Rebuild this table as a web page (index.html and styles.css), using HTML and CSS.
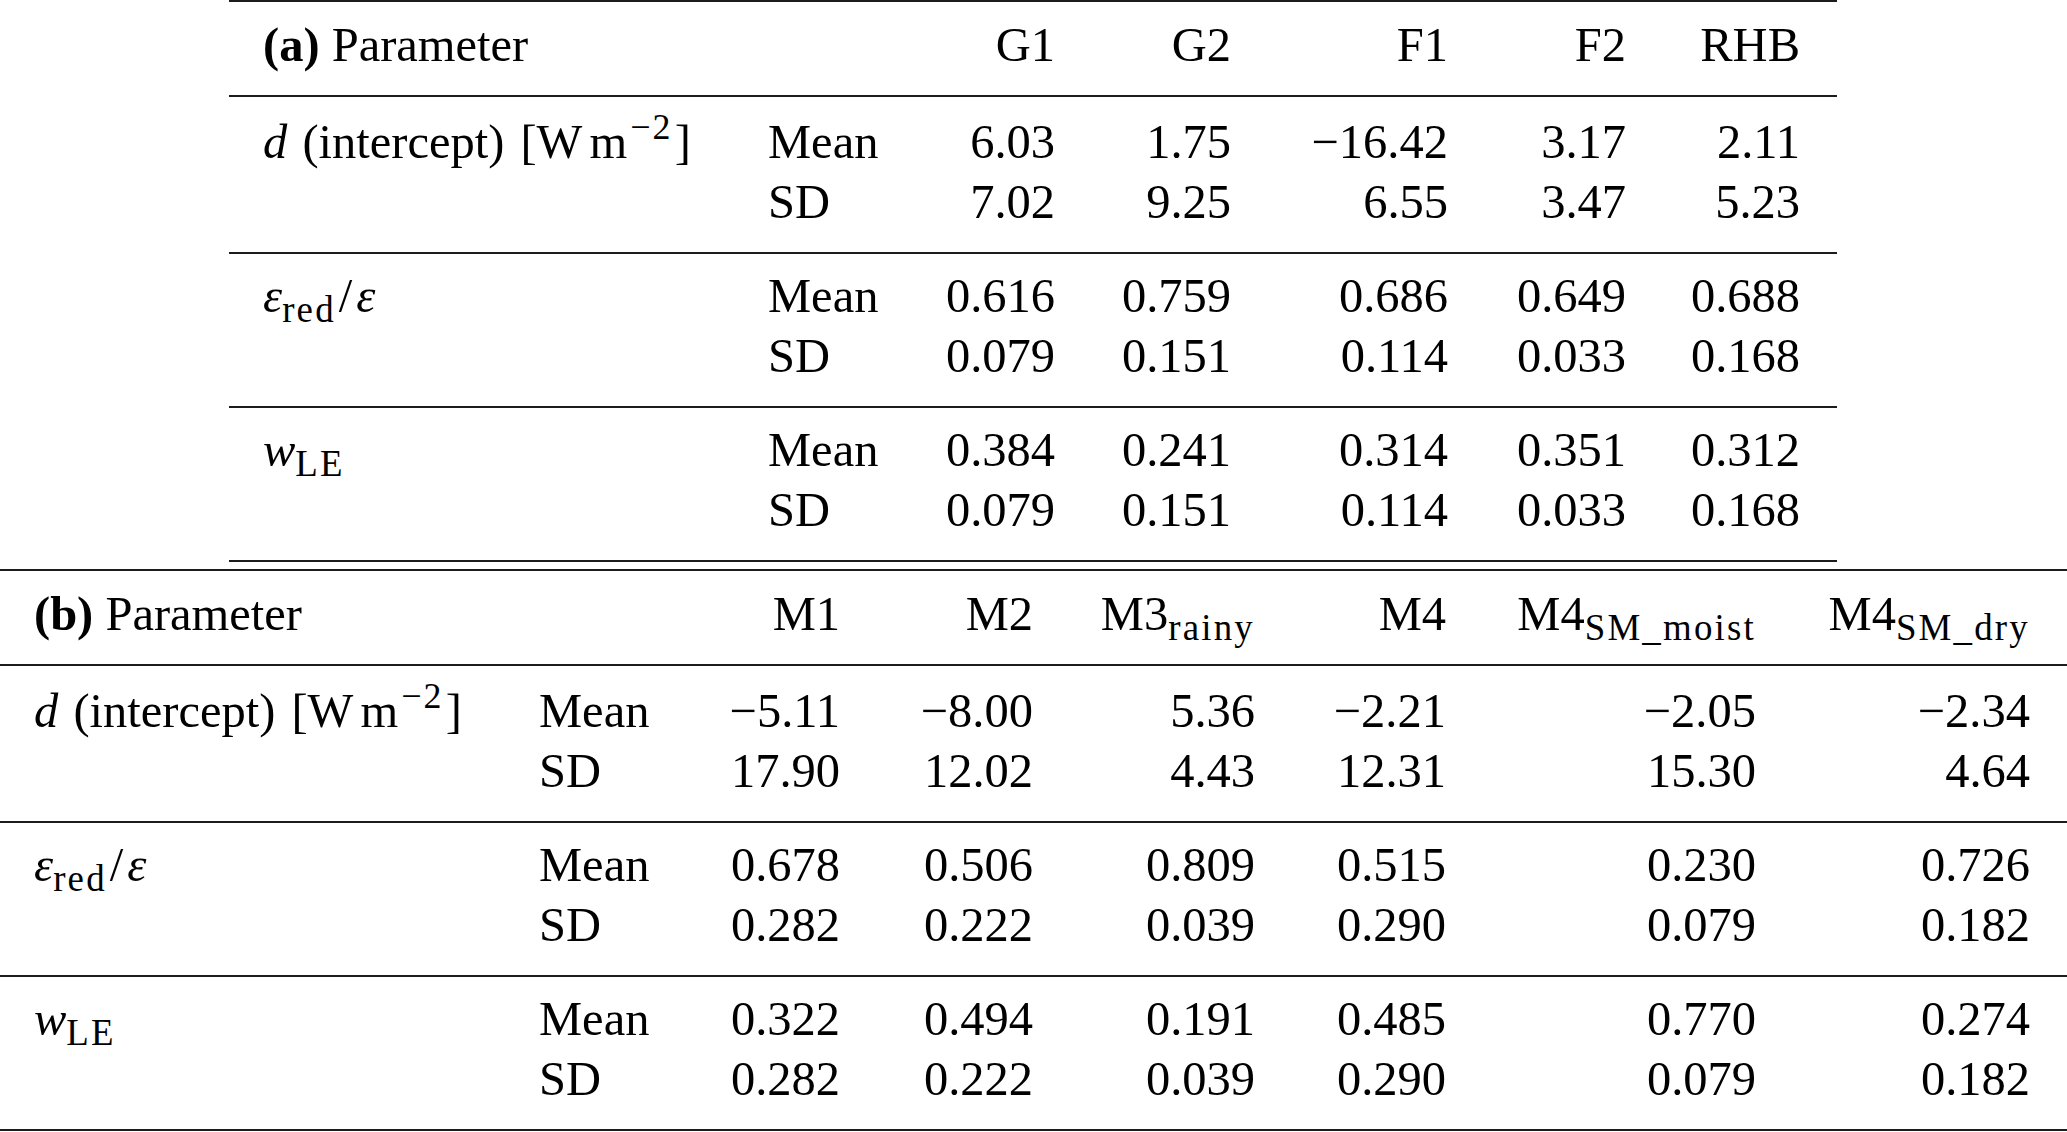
FILE: index.html
```html
<!DOCTYPE html>
<html lang="en">
<head>
<meta charset="utf-8">
<title>Parameter table</title>
<link rel="stylesheet" href="styles.css">
</head>
<body>
<section class="tbl tbl-a">
  <div class="row head">
    <div class="label"><b>(a)</b> Parameter</div>
    <div></div>
    <div class="num">G1</div>
    <div class="num">G2</div>
    <div class="num">F1</div>
    <div class="num">F2</div>
    <div class="num">RHB</div>
  </div>
  <div class="row group first">
    <div class="label"><i>d</i> <span class="wide">(intercept)</span> [W<span class="thin"></span>m<span class="sup">−2</span>]</div>
    <div>Mean</div>
    <div class="num">6.03</div><div class="num">1.75</div><div class="num">−16.42</div><div class="num">3.17</div><div class="num">2.11</div>
    <div>SD</div>
    <div class="num">7.02</div><div class="num">9.25</div><div class="num">6.55</div><div class="num">3.47</div><div class="num">5.23</div>
  </div>
  <div class="row group">
    <div class="label"><i>ε</i><span class="sub">red</span><span class="slash">/</span><i>ε</i></div>
    <div>Mean</div>
    <div class="num">0.616</div><div class="num">0.759</div><div class="num">0.686</div><div class="num">0.649</div><div class="num">0.688</div>
    <div>SD</div>
    <div class="num">0.079</div><div class="num">0.151</div><div class="num">0.114</div><div class="num">0.033</div><div class="num">0.168</div>
  </div>
  <div class="row group">
    <div class="label"><i>w</i><span class="sub">LE</span></div>
    <div>Mean</div>
    <div class="num">0.384</div><div class="num">0.241</div><div class="num">0.314</div><div class="num">0.351</div><div class="num">0.312</div>
    <div>SD</div>
    <div class="num">0.079</div><div class="num">0.151</div><div class="num">0.114</div><div class="num">0.033</div><div class="num">0.168</div>
  </div>
</section>
<section class="tbl tbl-b">
  <div class="row head">
    <div class="label"><b>(b)</b> Parameter</div>
    <div></div>
    <div class="num">M1</div>
    <div class="num">M2</div>
    <div class="num">M3<span class="sub">rainy</span></div>
    <div class="num">M4</div>
    <div class="num">M4<span class="sub">SM_moist</span></div>
    <div class="num">M4<span class="sub">SM_dry</span></div>
  </div>
  <div class="row group first">
    <div class="label"><i>d</i> <span class="wide">(intercept)</span> [W<span class="thin"></span>m<span class="sup">−2</span>]</div>
    <div>Mean</div>
    <div class="num">−5.11</div><div class="num">−8.00</div><div class="num">5.36</div><div class="num">−2.21</div><div class="num">−2.05</div><div class="num">−2.34</div>
    <div>SD</div>
    <div class="num">17.90</div><div class="num">12.02</div><div class="num">4.43</div><div class="num">12.31</div><div class="num">15.30</div><div class="num">4.64</div>
  </div>
  <div class="row group">
    <div class="label"><i>ε</i><span class="sub">red</span><span class="slash">/</span><i>ε</i></div>
    <div>Mean</div>
    <div class="num">0.678</div><div class="num">0.506</div><div class="num">0.809</div><div class="num">0.515</div><div class="num">0.230</div><div class="num">0.726</div>
    <div>SD</div>
    <div class="num">0.282</div><div class="num">0.222</div><div class="num">0.039</div><div class="num">0.290</div><div class="num">0.079</div><div class="num">0.182</div>
  </div>
  <div class="row group">
    <div class="label"><i>w</i><span class="sub">LE</span></div>
    <div>Mean</div>
    <div class="num">0.322</div><div class="num">0.494</div><div class="num">0.191</div><div class="num">0.485</div><div class="num">0.770</div><div class="num">0.274</div>
    <div>SD</div>
    <div class="num">0.282</div><div class="num">0.222</div><div class="num">0.039</div><div class="num">0.290</div><div class="num">0.079</div><div class="num">0.182</div>
  </div>
</section>
</body>
</html>
```
FILE: styles.css
```css
html, body {
  margin: 0;
  padding: 0;
  background: #ffffff;
  overflow: hidden;
}

body {
  color: #000000;
  font-family: "Liberation Serif", "Times New Roman", serif;
  font-size: 48.5px;
  line-height: 60px;
}

.tbl {
  border-top: 2px solid #1c1c1c;
}

.tbl-a {
  margin-left: 229px;
  width: 1608px;
}

.tbl-b {
  margin-top: 7px;
  width: 2067px;
}

.row {
  display: grid;
  padding: 12px 37px 20px 0;
  border-bottom: 2px solid #1c1c1c;
}

.tbl-a .row {
  grid-template-columns: 539px 132px 155px 176px 217px 178px 174px;
}

.tbl-b .row {
  grid-template-columns: 539px 141px 160px 193px 222px 191px 310px 274px;
}

.row.head {
  padding-top: 13px;
}

.row.first {
  padding-top: 15px;
}

.label {
  padding-left: 34px;
  white-space: nowrap;
}

.group .label {
  grid-row: span 2;
}

.num {
  text-align: right;
  white-space: nowrap;
}

b {
  font-weight: bold;
}

i {
  font-style: italic;
}

.wide {
  margin-left: 3px;
  margin-right: 4px;
}

.thin {
  display: inline-block;
  width: 7px;
}

.slash {
  margin: 0 4px 0 3px;
}

.sub {
  font-size: 0.76em;
  letter-spacing: 0.06em;
  line-height: 0;
  vertical-align: -0.28em;
}

.sup {
  font-size: 0.74em;
  letter-spacing: 0.06em;
  line-height: 0;
  vertical-align: 0.52em;
  margin-left: 3px;
  margin-right: 2px;
}
```
